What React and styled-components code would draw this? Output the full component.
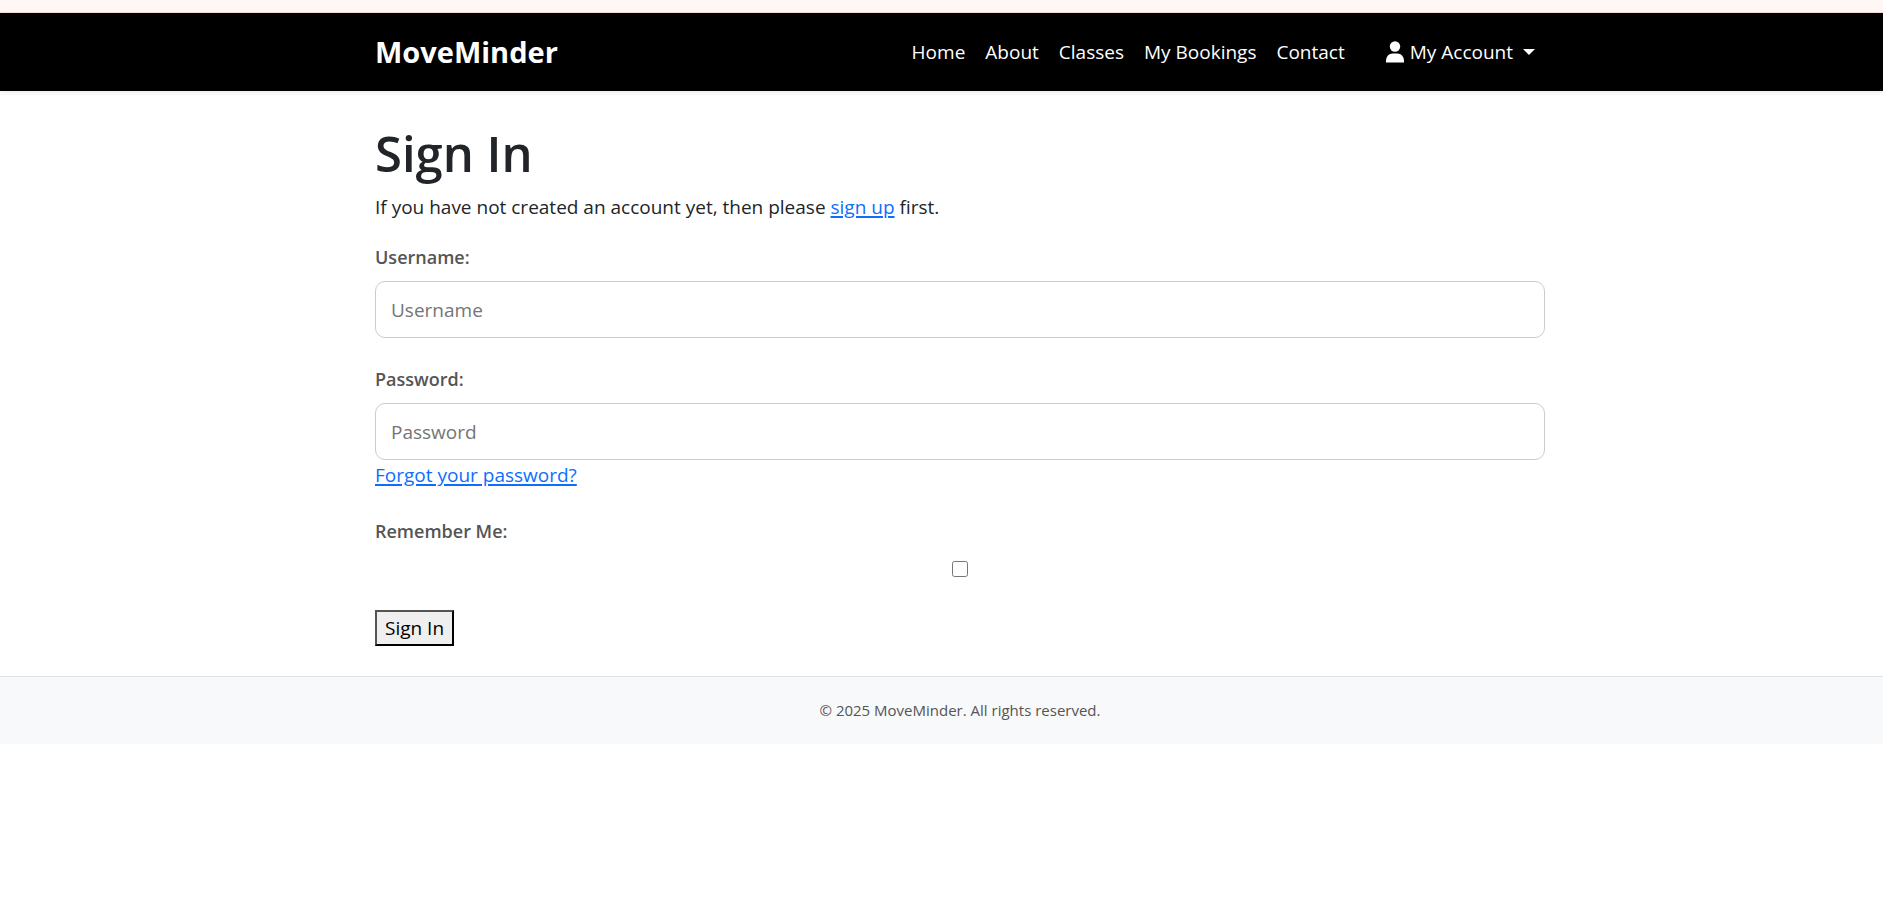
import React from "react";
import styled, { createGlobalStyle } from "styled-components";

const GlobalStyle = createGlobalStyle`
  *, *::before, *::after { box-sizing: border-box; }
  body {
    margin: 0;
    background: #fff;
    color: #212529;
    font-family: "Segoe UI", "Open Sans", "Noto Sans", sans-serif;
    font-size: 19px;
    line-height: 30px;
  }
  a { color: #0d6efd; text-underline-offset: 2px; text-decoration-thickness: 2px; }
`;

const Notice = styled.div`
  height: 13px;
  background: #fff7f5;
  border-bottom: 1px solid #fbdcd4;
`;

const Header = styled.header`
  padding-left: 37px;
  background: #000;
  box-shadow: 0 2px 5px rgba(0, 0, 0, 0.08);
`;

const Container = styled.div`
  width: 100%;
  max-width: 1170px;
  margin: 0 auto;
`;

const Bar = styled(Container)`
  display: flex;
  align-items: center;
  justify-content: space-between;
  min-height: 78px;
`;

const Brand = styled.a`
  color: #fff;
  font-size: 29px;
  font-weight: 700;
  line-height: 40px;
  text-decoration: none;
`;

const Nav = styled.nav`
  display: flex;
  align-items: center;
`;

const NavLink = styled.a`
  padding: 10px;
  color: #fff;
  text-decoration: none;
`;

const AccountButton = styled.button`
  display: flex;
  align-items: center;
  margin-left: 20px;
  padding: 10px;
  border: 0;
  background: none;
  color: #fff;
  font: inherit;
  cursor: pointer;
`;

const UserIcon = styled.svg`
  width: 20px;
  height: 22px;
  margin-right: 5px;
`;

const Caret = styled.span`
  margin-left: 10px;
  border-top: 6px solid #fff;
  border-right: 6px solid transparent;
  border-left: 6px solid transparent;
`;

const Main = styled.main`
  padding: 32px 0 30px 37px;
`;

const Title = styled.h1`
  margin: 0 0 9px;
  font-size: 49px;
  font-weight: 600;
  line-height: 60px;
`;

const Intro = styled.p`
  margin: 0 0 20px;
`;

const Field = styled.div`
  display: flex;
  flex-direction: column;
  align-items: flex-start;
  margin-bottom: 26px;
`;

const Label = styled.label`
  margin-bottom: 9px;
  color: #555;
  font-size: 18px;
  font-weight: 600;
`;

const TextInput = styled.input`
  width: 100%;
  height: 57px;
  padding: 0 15px;
  border: 1px solid #ccc;
  border-radius: 10px;
  background: #fff;
  color: #212529;
  font: inherit;
  &::placeholder { color: #757575; opacity: 1; }
`;

const Checkbox = styled.input`
  width: 16px;
  height: 16px;
  margin: 6px auto 7px;
`;

const SubmitButton = styled.button`
  display: block;
  height: 36px;
  padding: 0 8px;
  border: 2px outset #000;
  background: #efefef;
  color: #000;
  font: inherit;
  line-height: 32px;
`;

const Footer = styled.footer`
  padding: 20px 0 21px 37px;
  border-top: 1px solid #dee2e6;
  background: #f8f9fa;
  color: #555;
  font-size: 15px;
  line-height: 26px;
  text-align: center;
`;

const links = ["Home", "About", "Classes", "My Bookings", "Contact"];

export default function App() {
  return (
    <>
      <GlobalStyle />
      <Notice />
      <Header>
        <Bar>
          <Brand href="#">MoveMinder</Brand>
          <Nav>
            {links.map((text) => (
              <NavLink href="#" key={text}>{text}</NavLink>
            ))}
            <AccountButton type="button">
              <UserIcon viewBox="0 0 20 22" fill="currentColor" aria-hidden="true">
                <circle cx="10" cy="5.5" r="5.2" />
                <path d="M1 21.5v-1.3c0-4.6 3-7.7 6.5-7.7h5c3.500 0 6.500 3.100 6.500 7.700v1.300z" />
              </UserIcon>
              My Account
              <Caret />
            </AccountButton>
          </Nav>
        </Bar>
      </Header>
      <Main>
        <Container>
          <Title>Sign In</Title>
          <Intro>
            If you have not created an account yet, then please <a href="#">sign up</a> first.
          </Intro>
          <form onSubmit={(e) => e.preventDefault()}>
            <Field>
              <Label htmlFor="username">Username:</Label>
              <TextInput id="username" type="text" placeholder="Username" />
            </Field>
            <Field>
              <Label htmlFor="password">Password:</Label>
              <TextInput id="password" type="password" placeholder="Password" />
              <a href="#">Forgot your password?</a>
            </Field>
            <Field>
              <Label htmlFor="remember">Remember Me:</Label>
              <Checkbox id="remember" type="checkbox" />
            </Field>
            <SubmitButton type="submit">Sign In</SubmitButton>
          </form>
        </Container>
      </Main>
      <Footer>© 2025 MoveMinder. All rights reserved.</Footer>
    </>
  );
}
